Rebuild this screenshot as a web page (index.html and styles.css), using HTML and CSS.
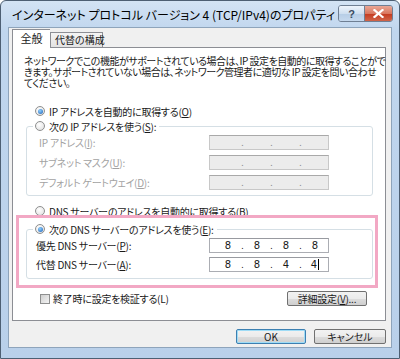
FILE: index.html
```html
<!DOCTYPE html>
<html lang="ja">
<head>
  <meta charset="UTF-8">
  <title>インターネット プロトコル バージョン 4 (TCP/IPv4)のプロパティ</title>
  <link rel="stylesheet" href="styles.css">
</head>
<body>
  <div class="window">
    <div class="titlebar">
      <span class="title">インターネット プロトコル バージョン 4 (TCP/IPv4)のプロパティ</span>
      <div class="caption-btns">
        <span class="cap help">?</span>
        <span class="cap close">
          <svg width="11" height="9" viewBox="0 0 11 9"><path d="M1.5 1 L9.5 8 M9.5 1 L1.5 8" stroke="#fff" stroke-width="2.2" stroke-linecap="square"/></svg>
        </span>
      </div>
    </div>

    <div class="client">
      <div class="tabs">
        <span class="tab active">全般</span>
        <span class="tab">代替の構成</span>
      </div>

      <div class="panel">
        <p class="desc">ネットワークでこの機能がサポートされている場合は、IP 設定を自動的に取得することがで<br>きます。サポートされていない場合は、ネットワーク管理者に適切な IP 設定を問い合わせ<br>てください。</p>

        <label class="radio-row">
          <span class="radio checked"></span>IP アドレスを自動的に取得する(<u>O</u>)
        </label>

        <fieldset class="group ip-group">
          <legend class="radio-row">
            <span class="radio"></span>次の IP アドレスを使う(<u>S</u>):
          </legend>
          <div class="field-row disabled">
            <span class="label">IP アドレス(<u>I</u>):</span>
            <span class="ipbox"><i></i><b>.</b><i></i><b>.</b><i></i><b>.</b><i></i></span>
          </div>
          <div class="field-row disabled">
            <span class="label">サブネット マスク(<u>U</u>):</span>
            <span class="ipbox"><i></i><b>.</b><i></i><b>.</b><i></i><b>.</b><i></i></span>
          </div>
          <div class="field-row disabled">
            <span class="label">デフォルト ゲートウェイ(<u>D</u>):</span>
            <span class="ipbox"><i></i><b>.</b><i></i><b>.</b><i></i><b>.</b><i></i></span>
          </div>
        </fieldset>

        <label class="radio-row dns-auto">
          <span class="radio"></span>DNS サーバーのアドレスを自動的に取得する(<u>B</u>)
        </label>

        <fieldset class="group dns-group">
          <legend class="radio-row">
            <span class="radio checked"></span>次の DNS サーバーのアドレスを使う(<u>E</u>):
          </legend>
          <div class="field-row">
            <span class="label">優先 DNS サーバー(<u>P</u>):</span>
            <span class="ipbox"><i>8</i><b>.</b><i>8</i><b>.</b><i>8</i><b>.</b><i>8</i></span>
          </div>
          <div class="field-row">
            <span class="label">代替 DNS サーバー(<u>A</u>):</span>
            <span class="ipbox"><i>8</i><b>.</b><i>8</i><b>.</b><i>4</i><b>.</b><i><span class="caret">4</span></i></span>
          </div>
        </fieldset>

        <div class="check-row">
          <span class="checkbox"></span>
          <span class="check-label">終了時に設定を検証する(L)</span>
          <span class="btn detail">詳細設定(<u>V</u>)...</span>
        </div>

        <div class="highlight"></div>
      </div>

      <div class="footer">
        <span class="btn ok">OK</span>
        <span class="btn">キャンセル</span>
      </div>
    </div>
  </div>
</body>
</html>
```

FILE: styles.css
```css
body {
  margin: 0;
  width: 400px;
  height: 359px;
  overflow: hidden;
  background: #fff;
  font-family: "Noto Sans CJK JP", "Noto Sans", sans-serif;
  font-feature-settings: "palt";
  color: #1a1a1a;
}

.window {
  box-sizing: border-box;
  width: 400px;
  height: 359px;
  border: 1px solid #4d5f73;
  border-radius: 6px 6px 0 0;
  background: linear-gradient(#d3e3f4, #c0d6ee 30px, #b9d0ea);
  display: flex;
  flex-direction: column;
}

.titlebar {
  height: 26px;
  display: flex;
  align-items: center;
  padding: 0 6px 0 11px;
}
.title {
  flex: 1;
  font-size: 12px;
  color: #000;
  white-space: nowrap;
}
.caption-btns {
  display: flex;
  align-self: flex-start;
  margin-top: 4px;
  border: 1px solid #6f7f93;
  border-radius: 3px;
  overflow: hidden;
}
.cap {
  height: 15px;
  display: flex;
  align-items: center;
  justify-content: center;
}
.help {
  width: 25px;
  background: linear-gradient(#eef4fb, #cfdff0 50%, #b6cde6 51%, #c6d9ee);
  border-right: 1px solid #6f7f93;
  font-family: "Liberation Sans", sans-serif;
  font-size: 11px;
  font-weight: bold;
  color: #3b4b61;
}
.close {
  width: 27px;
  background: linear-gradient(#e9a796, #d9775f 50%, #c4391e 51%, #d0654a);
}

.client {
  flex: 1;
  margin: 0 7px 10px;
  background: #f0f0f0;
  border: 1px solid #8ea4bb;
  padding: 1px 5px 0 3px;
}

.tabs {
  display: flex;
  align-items: flex-end;
  height: 18px;
  font-size: 10px;
  position: relative;
  z-index: 1;
}
.tab {
  box-sizing: border-box;
  height: 15px;
  padding: 0 4px;
  width: 53px;
  border: 1px solid #8c8e94;
  border-bottom: none;
  background: linear-gradient(#f4f4f4, #e3e3e3);
  line-height: 14px;
  text-align: center;
  white-space: nowrap;
}
.tab.active {
  width: 38px;
  height: 19px;
  margin-bottom: -1px;
  background: #fff;
  border-right: none;
  line-height: 17px;
  font-size: 11px;
}

.panel {
  position: relative;
  box-sizing: border-box;
  height: 274px;
  background: #fff;
  border: 1px solid #8c8e94;
  font-size: 10px;
  letter-spacing: -0.25px;
}

.desc {
  margin: 7px 0 0 11px;
  line-height: 11px;
  white-space: nowrap;
  letter-spacing: -0.5px;
}

.radio-row {
  display: flex;
  align-items: center;
  height: 16px;
  white-space: nowrap;
}
.panel > .radio-row {
  margin: 15px 0 0 22px;
}
.panel > .radio-row.dns-auto {
  margin-top: 7px;
}
.radio {
  box-sizing: border-box;
  width: 10px;
  height: 10px;
  margin-right: 4px;
  border: 1px solid #8e8f8f;
  border-radius: 50%;
  background: radial-gradient(circle at 40% 35%, #fff, #dcdcdc);
  display: flex;
  align-items: center;
  justify-content: center;
}
.radio.checked::after {
  content: "";
  width: 5px;
  height: 5px;
  border-radius: 50%;
  background: radial-gradient(circle at 40% 35%, #8fd0ff, #1b5fb5);
}

.group {
  margin: 0 12px 0 13px;
  border: 1px solid #d5dfe5;
  border-radius: 3px;
  padding: 2px 0 5px 12px;
  min-width: 0;
}
.group legend {
  height: 14px;
  padding: 0 3px 0 2px;
  margin-left: -6px;
}
.dns-group {
  margin-top: 3px;
  padding: 2px 0 6px 9px;
}
.dns-group legend {
  margin-left: -3px;
}

.field-row {
  display: flex;
  align-items: center;
  height: 15px;
  white-space: nowrap;
}
.field-row + .field-row {
  margin-top: 5px;
}
.dns-group .field-row + .field-row {
  margin-top: 4px;
}
.ip-group .label {
  width: 170px;
}
.dns-group .label {
  width: 173px;
}
.disabled .label {
  color: #a2a2a2;
}

.ipbox {
  box-sizing: border-box;
  width: 120px;
  height: 15px;
  padding-left: 7px;
  display: flex;
  align-items: center;
  border: 1px solid #abadb3;
  border-top-color: #989aa0;
  background: #fff;
  font-family: "DejaVu Sans", sans-serif;
  font-size: 10px;
  letter-spacing: 0;
}
.ipbox i {
  font-style: normal;
  width: 22px;
  text-align: center;
}
.ipbox b {
  font-weight: normal;
  width: 7px;
  text-align: center;
  font-size: 9px;
}
.disabled .ipbox {
  background: #ececec;
  border-color: #c8c8c8;
  border-top-color: #a9a9a9;
  color: #8a8a8a;
}
.caret {
  border-right: 1px solid #000;
  padding-right: 1px;
}

.check-row {
  display: flex;
  align-items: center;
  height: 15px;
  margin: 12px 18px 0 27px;
  white-space: nowrap;
}
.checkbox {
  box-sizing: border-box;
  width: 10px;
  height: 10px;
  margin-right: 3px;
  border: 1px solid #8e8f8f;
  background: linear-gradient(135deg, #cfcfcf, #f4f4f4);
}
.check-label {
  flex: 1;
}

.btn {
  box-sizing: border-box;
  height: 15px;
  border: 1px solid #707070;
  border-radius: 2px;
  background: linear-gradient(#f2f2f2, #ebebeb 50%, #dddddd 51%, #cfcfcf);
  font-size: 10px;
  line-height: 13px;
  text-align: center;
  white-space: nowrap;
}
.detail {
  width: 80px;
}

.highlight {
  position: absolute;
  left: 3px;
  top: 167px;
  box-sizing: border-box;
  width: 362px;
  height: 73px;
  border: 3px solid #f2a8c4;
}

.footer {
  display: flex;
  justify-content: flex-end;
  gap: 8px;
  margin-top: 8px;
}
.footer .btn {
  width: 72px;
}
.footer .btn.ok {
  width: 70px;
  border-color: #3c7fb1;
  box-shadow: inset 0 0 0 1px #9fdcf6;
}
```
